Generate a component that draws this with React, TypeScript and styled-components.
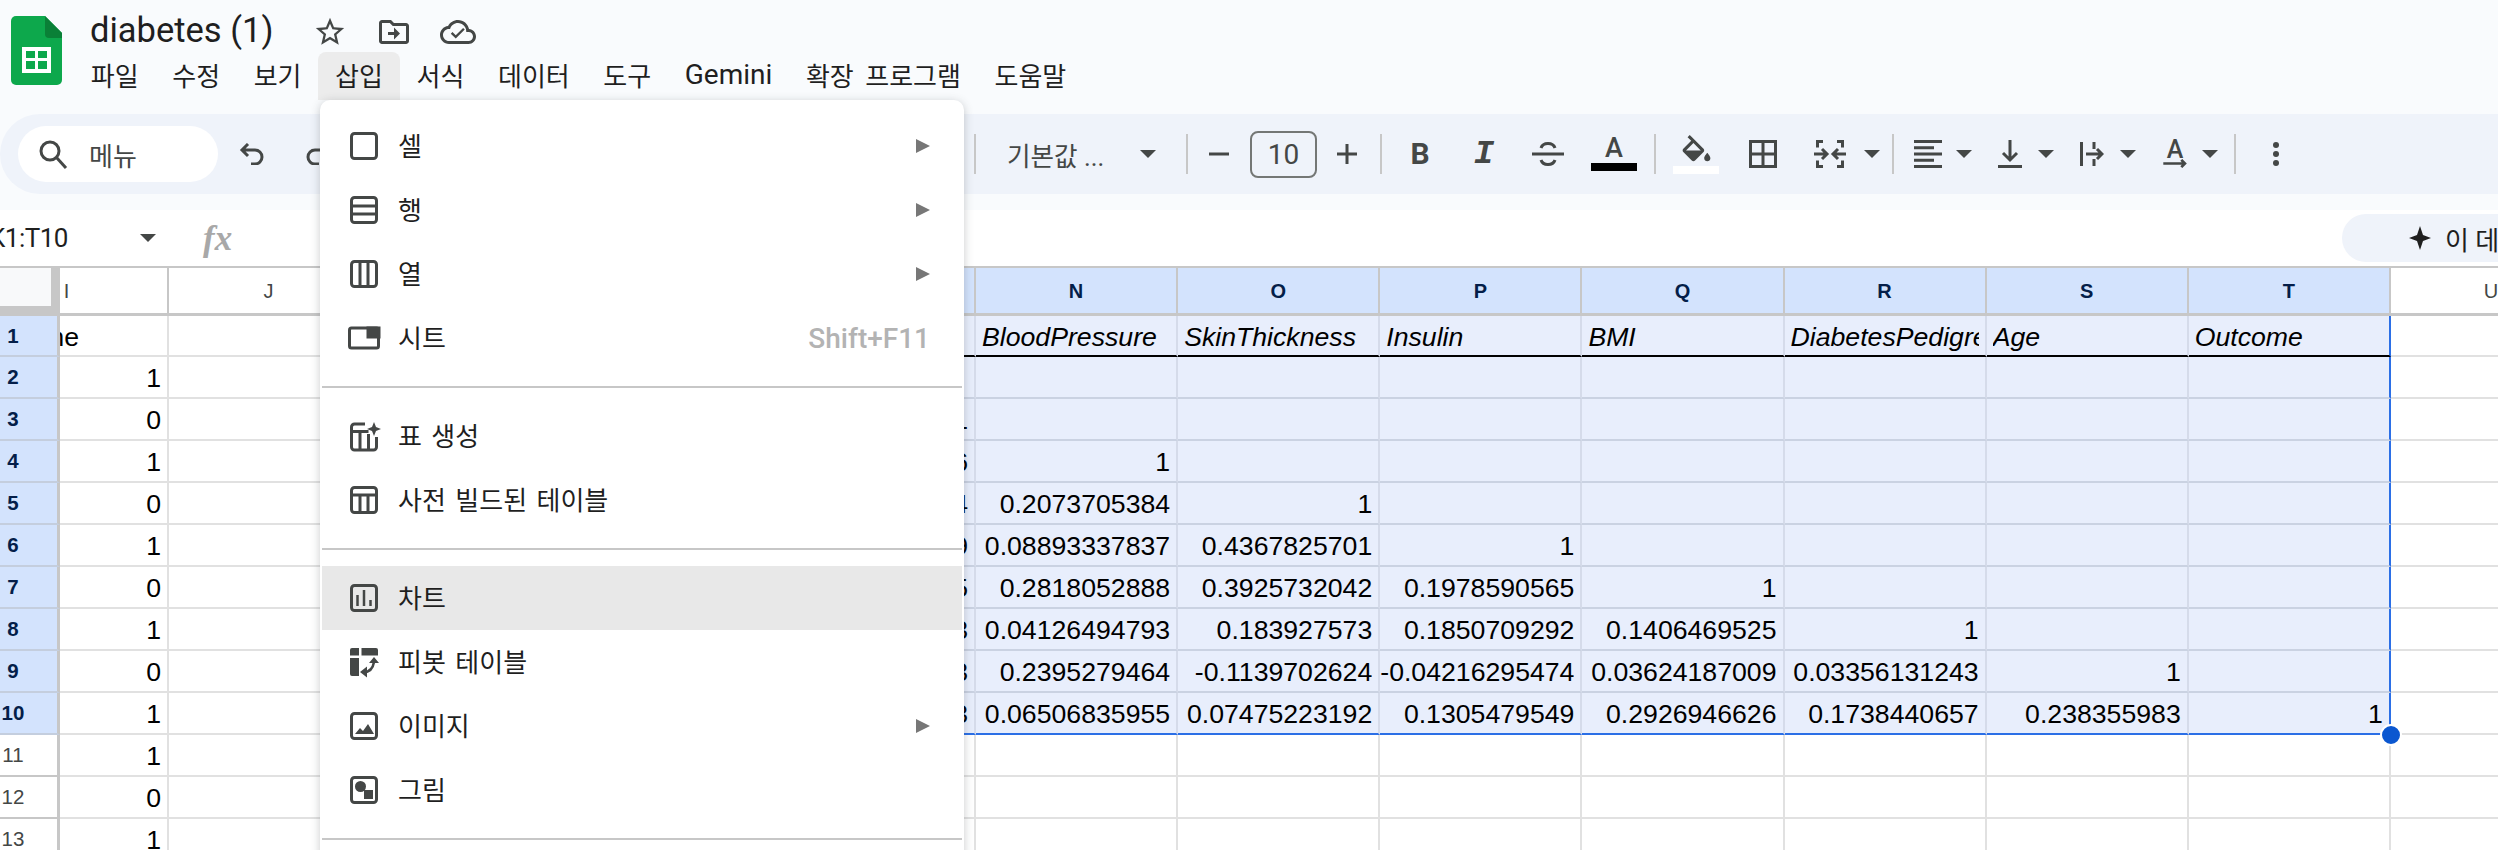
import React from "react";
import styled, { createGlobalStyle } from "styled-components";

const ui = `Roboto, "Noto Sans CJK KR", sans-serif`;
const iconColor = "#444746";

const GlobalStyle = createGlobalStyle`
  html, body {
    margin: 0;
    width: 2498px;
    height: 850px;
    overflow: hidden;
    background: #fff;
    font-family: ${ui};
  }
  * { box-sizing: border-box; }
`;

const Page = styled.div`
  position: relative;
  width: 2498px;
  height: 850px;
  overflow: hidden;
`;

/* ---------- header ---------- */
const Header = styled.header`
  height: 210px;
  background: #f9fbfd;
`;
const TopBar = styled.div`
  display: flex;
  height: 114px;
  padding: 16px 0 0 11px;
`;
const TitleColumn = styled.div`
  display: flex;
  flex-direction: column;
  margin-left: 28px;
  margin-top: -16px;
`;
const TitleRow = styled.div`
  display: flex;
  align-items: center;
  height: 52px;
  padding-top: 8px;
`;
const Title = styled.div`
  width: 223px;
  font-size: 34.5px;
  color: #1f1f1f;
`;
const TitleIcon = styled.svg<{ $ml: number }>`
  margin-left: ${(p) => p.$ml}px;
  margin-top: 3px;
  fill: ${iconColor};
`;
const MenuBar = styled.nav`
  display: flex;
  margin-left: -16px;
  height: 48px;
`;
const MenuTab = styled.div<{ $active?: boolean; $latin?: boolean }>`
  display: flex;
  align-items: center;
  padding: 0 16.8px 3px;
  height: 48px;
  font-size: ${(p) => (p.$latin ? "28px" : "26px")};
  color: #1f1f1f;
  white-space: nowrap;
  word-spacing: 5px;
  border-radius: 8px 8px 0 0;
  background: ${(p) => (p.$active ? "#ececec" : "transparent")};
`;

const Toolbar = styled.div`
  display: flex;
  align-items: center;
  height: 80px;
  padding-left: 18px;
  background: #eff3fa;
  border-radius: 40px 0 0 40px;
`;
const SearchPill = styled.div`
  display: flex;
  align-items: center;
  gap: 21px;
  width: 200px;
  height: 56px;
  padding-left: 20px;
  background: #fff;
  border-radius: 28px;
  font-size: 26px;
  color: #444746;
`;
const Tool = styled.div<{ $ml: number; $w: number }>`
  display: flex;
  flex-direction: column;
  align-items: center;
  justify-content: center;
  flex: 0 0 ${(p) => p.$w}px;
  width: ${(p) => p.$w}px;
  margin-left: ${(p) => p.$ml}px;
  color: ${iconColor};
`;
const Sep = styled.div<{ $ml: number }>`
  flex: 0 0 2px;
  height: 40px;
  margin-left: ${(p) => p.$ml}px;
  background: #c7c7c7;
`;
const Caret = styled.div<{ $ml: number }>`
  flex: 0 0 16px;
  margin-left: ${(p) => p.$ml}px;
  border-left: 8px solid transparent;
  border-right: 8px solid transparent;
  border-top: 8px solid ${iconColor};
`;
const FontName = styled.div`
  flex: 0 0 99px;
  margin-left: 31px;
  font-size: 25.6px;
  color: #444746;
  white-space: nowrap;
`;
const SizeBox = styled.div`
  display: flex;
  align-items: center;
  justify-content: center;
  flex: 0 0 67px;
  height: 47px;
  margin-left: 21px;
  border: 2px solid #747775;
  border-radius: 8px;
  font-size: 28px;
  color: #444746;
`;
const BoldGlyph = styled.span`
  font: 700 30px/1 Roboto, sans-serif;
`;
const ItalicGlyph = styled.span`
  font: italic 700 34px/1 "Liberation Mono", monospace;
`;
const LetterGlyph = styled.span`
  font: 500 27px/21px Roboto, sans-serif;
  height: 21px;
`;
const ColorBar = styled.div<{ $c: string }>`
  width: 46px;
  height: 8px;
  margin-top: 4px;
  background: ${(p) => p.$c};
`;
const RotateGlyph = styled.div`
  display: flex;
  flex-direction: column;
  align-items: center;
  height: 28px;
  font: 500 25px/19px Roboto, sans-serif;
`;

/* ---------- formula bar ---------- */
const FormulaBar = styled.div`
  display: flex;
  align-items: center;
  height: 58px;
  background: #fff;
  border-bottom: 2px solid #c7c7c7;
`;
const NameBox = styled.div`
  flex: 0 0 auto;
  width: 151px;
  margin-left: -11px;
  font-size: 26px;
  color: #1f1f1f;
  letter-spacing: -0.5px;
`;
const FxLabel = styled.div`
  margin-left: 47px;
  font: italic 700 35px/1 "Liberation Serif", serif;
  color: #a8a8a8;
`;
const AskButton = styled.div`
  display: flex;
  align-items: center;
  gap: 14px;
  width: 156px;
  height: 48px;
  margin-left: auto;
  padding-left: 67px;
  overflow: hidden;
  white-space: nowrap;
  background: #eff3fa;
  border-radius: 24px 0 0 24px;
  font-size: 26px;
  color: #1f1f1f;
`;
const AskStar = styled.svg`
  flex: 0 0 22px;
`;

/* ---------- sheet ---------- */
const Sheet = styled.div`
  display: grid;
  grid-template-columns: 60px 109px 201px repeat(3, 202px) repeat(7, 202.14px) 202px;
  grid-template-rows: 48px 41px repeat(12, 42px);
`;
const Corner = styled.div`
  background: #f8f9fa;
  border-right: 9px solid #c7c7c7;
  border-bottom: 10px solid #c7c7c7;
`;
const ColHead = styled.div<{ $on?: boolean; $pr?: number }>`
  display: flex;
  align-items: center;
  justify-content: center;
  padding: 2px ${(p) => p.$pr ?? 0}px 0 0;
  background: ${(p) => (p.$on ? "#d3e3fd" : "#fff")};
  color: ${(p) => (p.$on ? "#041e49" : "#444746")};
  font: ${(p) => (p.$on ? 700 : 400)} 20px "Liberation Sans", sans-serif;
  border-right: 2px solid #c7c7c7;
  border-bottom: 3px solid #c7c7c7;
`;
const RowHead = styled.div<{ $on?: boolean }>`
  display: flex;
  align-items: center;
  padding-left: 1px;
  background: ${(p) => (p.$on ? "#d3e3fd" : "#fff")};
  color: ${(p) => (p.$on ? "#041e49" : "#444746")};
  font: ${(p) => (p.$on ? 700 : 400)} 20.5px "Liberation Sans", sans-serif;
  border-right: 3px solid #c7c7c7;
  border-bottom: 2px solid ${(p) => (p.$on ? "#c4cede" : "#c7c7c7")};
`;
const RowNum = styled.span`
  width: 24px;
  text-align: center;
`;
const Cell = styled.div<{
  $on?: boolean;
  $right?: boolean;
  $head?: boolean;
  $last?: boolean;
  $edge?: boolean;
}>`
  position: relative;
  display: flex;
  align-items: center;
  justify-content: ${(p) => (p.$right ? "flex-end" : "flex-start")};
  min-width: 0;
  padding: 3px 6px 0 ${(p) => (p.$right ? 0 : 6)}px;
  background: ${(p) => (p.$on ? "#e8eefc" : "#fff")};
  font: ${(p) => (p.$head ? "italic" : "normal")} 26.67px "Liberation Sans", sans-serif;
  color: #000;
  border-right: ${(p) =>
    p.$edge ? "2px solid #2b6fe6" : p.$on ? "2px solid #d5dbea" : "2px solid #e1e1e1"};
  border-bottom: 2px solid
    ${(p) => (p.$last ? "#2b6fe6" : p.$head ? "#000" : p.$on ? "#cad2e2" : "#e1e1e1")};
`;
const CellText = styled.span`
  display: block;
  overflow: hidden;
  white-space: nowrap;
`;
const ClippedTitle = styled(Cell)`
  justify-content: flex-end;
  padding-right: 88px;
  overflow: hidden;
`;
const Handle = styled.div`
  position: absolute;
  right: -13px;
  bottom: -13px;
  width: 22px;
  height: 22px;
  border-radius: 50%;
  background: #0b57d0;
  border: 2px solid #fff;
  z-index: 2;
`;

/* ---------- insert menu ---------- */
const InsertMenu = styled.div`
  position: absolute;
  left: 320px;
  top: 100px;
  z-index: 5;
  width: 644px;
  height: 780px;
  padding: 14px 2px 0;
  background: #fff;
  border-radius: 10px;
  box-shadow: 0 2px 10px rgba(60, 64, 67, 0.28);
`;
const Item = styled.div<{ $hover?: boolean }>`
  display: flex;
  align-items: center;
  height: 64px;
  padding: 0 32px 0 28px;
  background: ${(p) => (p.$hover ? "#e8e8e8" : "transparent")};
  font-size: 26px;
  color: #1f1f1f;
  word-spacing: 3px;
`;
const ItemLabel = styled.span`
  margin-top: -3px;
`;
const ItemIcon = styled.svg`
  flex: 0 0 28px;
  margin-right: 20px;
  overflow: visible;
  fill: none;
  stroke: ${iconColor};
  stroke-width: 3;
`;
const Arrow = styled.div`
  margin-left: auto;
  border-top: 7px solid transparent;
  border-bottom: 7px solid transparent;
  border-left: 14px solid #777;
`;
const Shortcut = styled.div`
  margin-left: auto;
  font: 500 28px Roboto, sans-serif;
  color: #b3b3b3;
  word-spacing: 0;
`;
const Divider = styled.div`
  display: flex;
  align-items: center;
  height: 34px;
  &::after {
    content: "";
    flex: 1;
    height: 2px;
    background: #c7c7c7;
  }
`;

/* ---------- icons ---------- */
const Logo = () => (
  <svg width="51" height="69" viewBox="0 0 51 69">
    <path d="M5 0h29l17 17v47a5 5 0 0 1-5 5H5a5 5 0 0 1-5-5V5a5 5 0 0 1 5-5z" fill="#0da84c" />
    <path d="M34 0l17 17v5H38a4 4 0 0 1-4-4z" fill="#0a8037" />
    <path
      d="M11 31h29v26H11zM15 35v7h9v-7zM27 35v7h9v-7zM15 45v8h9v-8zM27 45v8h9v-8z"
      fill="#fff"
      fillRule="evenodd"
    />
  </svg>
);
const Line = ({ d, w = 3 }: { d: string; w?: number }) => (
  <path d={d} fill="none" stroke={iconColor} strokeWidth={w} />
);

const icons: Record<string, React.ReactNode> = {
  cell: <rect x="1.5" y="1.5" width="25" height="25" rx="3" />,
  row: (
    <>
      <rect x="1.5" y="1.5" width="25" height="25" rx="3" />
      <path d="M1.5 10h25M1.5 18h25" />
    </>
  ),
  col: (
    <>
      <rect x="1.5" y="1.5" width="25" height="25" rx="3" />
      <path d="M10 1.5v25M18 1.5v25" />
    </>
  ),
  sheet: (
    <>
      <rect x="-0.5" y="4" width="29" height="20" rx="2" />
      <path d="M18 4h11v9H18z" fill={iconColor} />
    </>
  ),
  generate: (
    <>
      <path d="M15 2H4.5a3 3 0 0 0-3 3v20a3 3 0 0 0 3 3h19a3 3 0 0 0 3-3V15" />
      <path d="M1.5 9.5h17M10 9.5V28M18.500 12v16" />
      <path d="M24 0l2 5 5 2-5 2-2 5-2-5-5-2 5-2z" fill={iconColor} stroke="none" />
    </>
  ),
  prebuilt: (
    <>
      <rect x="1.5" y="1.5" width="25" height="25" rx="3" />
      <path d="M1.500 9h25M10 9v17M18 9v17" />
    </>
  ),
  chart: (
    <>
      <rect x="1.5" y="1.5" width="25" height="25" rx="3" />
      <path d="M7.500 11v11M14 6v16M20.500 16v6" strokeWidth="2.500" />
    </>
  ),
  pivot: (
    <>
      <path d="M2 0h7v7.500H0V2a2 2 0 0 1 2-2zM11.500 0H26a2 2 0 0 1 2 2v5.500H11.500zM0 10h9v18H2a2 2 0 0 1-2-2z" fill={iconColor} stroke="none" />
      <path d="M14 24c6 0 9-4 10-10" strokeWidth="2.500" />
      <path d="M19 15l5-6 5 6zM17 18.500l-7 5.500 7 5.500z" fill={iconColor} stroke="none" />
    </>
  ),
  image: (
    <>
      <rect x="1.5" y="1.5" width="25" height="25" rx="3" />
      <path d="M5 22l5-6 3 3 5-7 6 10z" fill={iconColor} stroke="none" />
    </>
  ),
  drawing: (
    <>
      <rect x="1.5" y="1.5" width="25" height="25" rx="3" />
      <circle cx="10.500" cy="10.500" r="5.500" fill={iconColor} stroke="none" />
      <path d="M14 14h9v9h-9z" fill={iconColor} stroke="none" />
    </>
  ),
};

const MenuIcon = ({ name }: { name: string }) => (
  <ItemIcon width="28" height="28" viewBox="0 0 28 28">
    {icons[name]}
  </ItemIcon>
);

/* ---------- data ---------- */
const tabs = ["파일", "수정", "보기", "삽입", "서식", "데이터", "도구", "Gemini", "확장 프로그램", "도움말"];
const selectedHeads = ["K", "L", "M", "N", "O", "P", "Q", "R", "S", "T"];
const titles = ["", "", "Glucose", "BloodPressure", "SkinThickness", "Insulin", "BMI", "DiabetesPedigreeFunction", "Age", "Outcome"];
const table: string[][] = [
  ["", "", "", "", "", "", "", "", "", ""],
  ["", "", "1", "", "", "", "", "", "", ""],
  ["", "", "0.1525895866", "1", "", "", "", "", "", ""],
  ["", "", "0.05732789054", "0.2073705384", "1", "", "", "", "", ""],
  ["", "", "0.3313571339", "0.08893337837", "0.4367825701", "1", "", "", "", ""],
  ["", "", "0.2210710695", "0.2818052888", "0.3925732042", "0.1978590565", "1", "", "", ""],
  ["", "", "0.1373372983", "0.04126494793", "0.183927573", "0.1850709292", "0.1406469525", "1", "", ""],
  ["", "", "0.2635143143", "0.2395279464", "-0.1139702624", "-0.04216295474", "0.03624187009", "0.03356131243", "1", ""],
  ["", "", "0.4665813983", "0.06506835955", "0.07475223192", "0.1305479549", "0.2926946626", "0.1738440657", "0.238355983", "1"],
];
const firstCol = ["1", "0", "1", "0", "1", "0", "1", "0", "1", "1", "0", "1"];

const SheetRows = () => (
  <>
    <RowHead $on>
      <RowNum>1</RowNum>
    </RowHead>
    <ClippedTitle>
      <span>Outcome</span>
    </ClippedTitle>
    <Cell />
    {titles.map((t, i) => (
      <Cell key={i} $on $head $edge={i === 9}>
        <CellText>{t}</CellText>
      </Cell>
    ))}
    <Cell />
    {firstCol.map((v, r) => {
      const row = table[r];
      return (
        <React.Fragment key={r}>
          <RowHead $on={r < 9}>
            <RowNum>{r + 2}</RowNum>
          </RowHead>
          <Cell $right>
            <CellText>{v}</CellText>
          </Cell>
          <Cell />
          {selectedHeads.map((_, c) => (
            <Cell key={c} $right $on={!!row} $last={r === 8} $edge={!!row && c === 9}>
              {row && <CellText>{row[c]}</CellText>}
              {r === 8 && c === 9 && <Handle />}
            </Cell>
          ))}
          <Cell />
        </React.Fragment>
      );
    })}
  </>
);

export default function App() {
  return (
    <Page>
      <GlobalStyle />
      <Header>
        <TopBar>
          <Logo />
          <TitleColumn>
            <TitleRow>
              <Title>diabetes (1)</Title>
              <TitleIcon $ml={0} width="34" height="34" viewBox="0 0 24 24">
                <path d="M22 9.24l-7.19-.62L12 2 9.19 8.63 2 9.24l5.46 4.73L5.820 21 12 17.270 18.180 21l-1.630-7.030L22 9.240zM12 15.400l-3.760 2.270 1-4.280-3.320-2.880 4.380-.380L12 6.100l1.710 4.040 4.380.380-3.320 2.880 1 4.280L12 15.400z" />
              </TitleIcon>
              <TitleIcon $ml={29} width="36" height="36" viewBox="0 0 24 24">
                <path d="M20 6h-8l-2-2H4c-1.100 0-1.990.9-1.990 2L2 18c0 1.100.9 2 2 2h16c1.100 0 2-.9 2-2V8c0-1.100-.9-2-2-2zm0 12H4V6h5.170l2 2H20v10zm-8-4H8v-2h4V9l4 4-4 4v-3z" />
              </TitleIcon>
              <TitleIcon $ml={28} width="36" height="36" viewBox="0 0 24 24">
                <path d="M19.350 10.040C18.670 6.590 15.640 4 12 4 9.110 4 6.600 5.640 5.350 8.040 2.340 8.360 0 10.910 0 14c0 3.310 2.690 6 6 6h13c2.760 0 5-2.240 5-5 0-2.640-2.050-4.780-4.650-4.960zM19 18H6c-2.210 0-4-1.790-4-4s1.790-4 4-4h.71C7.370 7.690 9.480 6 12 6c3.040 0 5.500 2.460 5.500 5.500v.5H19c1.660 0 3 1.340 3 3s-1.340 3-3 3z" />
                <path d="M10.500 14.200 8.300 12l-1.100 1.100 3.300 3.300 6-6-1.100-1.100z" />
              </TitleIcon>
            </TitleRow>
            <MenuBar>
              {tabs.map((t) => (
                <MenuTab key={t} $active={t === "삽입"} $latin={t === "Gemini"}>
                  {t}
                </MenuTab>
              ))}
            </MenuBar>
          </TitleColumn>
        </TopBar>

        <Toolbar>
          <SearchPill>
            <svg width="30" height="30" viewBox="0 0 30 30">
              <circle cx="12" cy="12" r="9" fill="none" stroke={iconColor} strokeWidth="3" />
              <path d="M18.500 18.500 28 29" stroke={iconColor} strokeWidth="3" fill="none" />
            </svg>
            메뉴
          </SearchPill>
          <Tool $ml={21} $w={26}>
            <svg width="26" height="22" viewBox="0 0 26 22">
              <Line d="M9 1 3 7l6 6M3 7h13a7 7 0 0 1 0 14h-4" />
            </svg>
          </Tool>
          <Tool $ml={40} $w={26}>
            <svg width="26" height="22" viewBox="0 0 26 22">
              <Line d="M17 1l6 6-6 6M23 7H10a7 7 0 0 0 0 14h4" />
            </svg>
          </Tool>
          <Sep $ml={643} />
          <FontName>기본값 ...</FontName>
          <Caret $ml={34} />
          <Sep $ml={30} />
          <Tool $ml={21} $w={20}>
            <svg width="20" height="4" viewBox="0 0 20 4">
              <Line d="M0 2h20" />
            </svg>
          </Tool>
          <SizeBox>10</SizeBox>
          <Tool $ml={20} $w={20}>
            <svg width="20" height="20" viewBox="0 0 20 20">
              <Line d="M0 10h20M10 0v20" />
            </svg>
          </Tool>
          <Sep $ml={23} />
          <Tool $ml={30} $w={16}>
            <BoldGlyph>B</BoldGlyph>
          </Tool>
          <Tool $ml={46} $w={20}>
            <ItalicGlyph>I</ItalicGlyph>
          </Tool>
          <Tool $ml={38} $w={32}>
            <svg width="32" height="24" viewBox="0 0 32 24">
              <Line d="M23 6c-1-3-4-4.500-7-4.500S10 3 9 6M0 12h32M9 18c1 3 4 4.500 7 4.500s6-1.500 7-4.500" />
            </svg>
          </Tool>
          <Tool $ml={27} $w={46}>
            <LetterGlyph>A</LetterGlyph>
            <ColorBar $c="#000" />
          </Tool>
          <Sep $ml={17} />
          <Tool $ml={17} $w={46}>
            <svg width="37" height="27" viewBox="0 0 24 17.500">
              <path
                fill={iconColor}
                d="M16.560 8.940L7.620 0 6.210 1.410l2.380 2.380-5.150 5.150c-.59.59-.59 1.540 0 2.120l5.500 5.500c.29.29.68.44 1.060.44s.77-.15 1.060-.44l5.500-5.500c.59-.58.59-1.530 0-2.120zM5.210 10L10 5.210 14.790 10H5.210zM19 11.500s-2 2.170-2 3.500c0 1.100.9 2 2 2s2-.9 2-2c0-1.330-2-3.500-2-3.500z"
              />
            </svg>
            <ColorBar $c="#fff" />
          </Tool>
          <Tool $ml={30} $w={28}>
            <svg width="28" height="28" viewBox="0 0 28 28">
              <Line d="M1.500 1.500h25v25h-25zM14 1.500v25M1.500 14h25" />
            </svg>
          </Tool>
          <Tool $ml={37} $w={32}>
            <svg width="32" height="28" viewBox="0 0 32 28">
              <Line d="M9 1.500H3.500v6M3.500 20.500v6H9M23 1.500h5.500v6M28.500 20.500v6H23M0 14h12M8 9l5 5-5 5M32 14H20M24 9l-5 5 5 5" />
            </svg>
          </Tool>
          <Caret $ml={18} />
          <Sep $ml={12} />
          <Tool $ml={20} $w={28}>
            <svg width="28" height="28" viewBox="0 0 28 28">
              <Line d="M0 1.500h28M0 7.800h20M0 14h28M0 20.200h20M0 26.500h28" />
            </svg>
          </Tool>
          <Caret $ml={14} />
          <Tool $ml={26} $w={24}>
            <svg width="24" height="28" viewBox="0 0 24 28">
              <Line d="M12 0v20M5 13l7 7 7-7M0 26.500h24" />
            </svg>
          </Tool>
          <Caret $ml={16} />
          <Tool $ml={26} $w={24}>
            <svg width="24" height="24" viewBox="0 0 24 24">
              <Line d="M1.500 0v24M14 0v7M14 17v7M6 12h16M17 7l5 5-5 5" />
            </svg>
          </Tool>
          <Caret $ml={16} />
          <Tool $ml={26} $w={26}>
            <RotateGlyph>
              A
              <svg width="26" height="10" viewBox="0 0 26 10">
                <Line d="M0 5h24M20 1l4 4-4 4" />
              </svg>
            </RotateGlyph>
          </Tool>
          <Caret $ml={14} />
          <Sep $ml={16} />
          <Tool $ml={37} $w={6}>
            <svg width="6" height="24" viewBox="0 0 6 24">
              <circle cx="3" cy="3" r="3" fill={iconColor} />
              <circle cx="3" cy="12" r="3" fill={iconColor} />
              <circle cx="3" cy="21" r="3" fill={iconColor} />
            </svg>
          </Tool>
        </Toolbar>
      </Header>

      <FormulaBar>
        <NameBox>K1:T10</NameBox>
        <Caret $ml={0} />
        <FxLabel>fx</FxLabel>
        <AskButton>
          <AskStar width="22" height="24" viewBox="0 0 22 24">
            <path d="M11 0l3 9 8 3-8 3-3 9-3-9-8-3 8-3z" fill="#1f1f1f" />
          </AskStar>
          이 데이터
        </AskButton>
      </FormulaBar>

      <Sheet>
        <Corner />
        <ColHead $pr={94}>I</ColHead>
        <ColHead>J</ColHead>
        {selectedHeads.map((h) => (
          <ColHead key={h} $on>
            {h}
          </ColHead>
        ))}
        <ColHead>U</ColHead>
        <SheetRows />
      </Sheet>

      <InsertMenu>
        <Item>
          <MenuIcon name="cell" />
          <ItemLabel>셀</ItemLabel>
          <Arrow />
        </Item>
        <Item>
          <MenuIcon name="row" />
          <ItemLabel>행</ItemLabel>
          <Arrow />
        </Item>
        <Item>
          <MenuIcon name="col" />
          <ItemLabel>열</ItemLabel>
          <Arrow />
        </Item>
        <Item>
          <MenuIcon name="sheet" />
          <ItemLabel>시트</ItemLabel>
          <Shortcut>Shift+F11</Shortcut>
        </Item>
        <Divider />
        <Item>
          <MenuIcon name="generate" />
          <ItemLabel>표 생성</ItemLabel>
        </Item>
        <Item>
          <MenuIcon name="prebuilt" />
          <ItemLabel>사전 빌드된 테이블</ItemLabel>
        </Item>
        <Divider />
        <Item $hover>
          <MenuIcon name="chart" />
          <ItemLabel>차트</ItemLabel>
        </Item>
        <Item>
          <MenuIcon name="pivot" />
          <ItemLabel>피봇 테이블</ItemLabel>
        </Item>
        <Item>
          <MenuIcon name="image" />
          <ItemLabel>이미지</ItemLabel>
          <Arrow />
        </Item>
        <Item>
          <MenuIcon name="drawing" />
          <ItemLabel>그림</ItemLabel>
        </Item>
        <Divider />
      </InsertMenu>
    </Page>
  );
}
